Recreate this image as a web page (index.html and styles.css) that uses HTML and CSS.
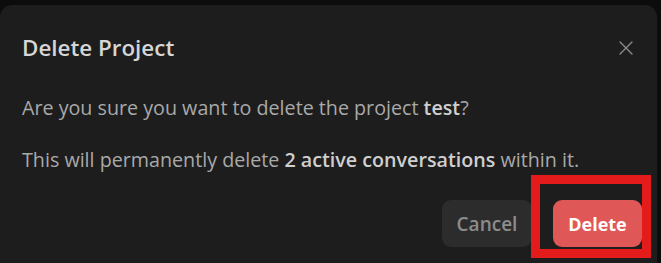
FILE: index.html
```html
<!DOCTYPE html>
<html>
<head>
<meta charset="utf-8">
<link rel="stylesheet" href="styles.css">
</head>
<body>
<div class="dialog">
  <div class="header">
    <h2 class="title">Delete Project</h2>
    <button class="close" aria-label="Close">
      <svg width="14" height="14" viewBox="0 0 14 14"><path d="M1 1L13 13M13 1L1 13" stroke="#8a8a8a" stroke-width="1.4" fill="none" stroke-linecap="round"/></svg>
    </button>
  </div>
  <p class="text first">Are you sure you want to delete the project <b>test</b>?</p>
  <p class="text second">This will permanently delete <b>2 active conversations</b> within it.</p>
  <div class="actions">
    <button class="btn cancel">Cancel</button>
    <div class="mark">
      <button class="btn delete">Delete</button>
      <span class="highlight"></span>
    </div>
  </div>
</div>
</body>
</html>
```
FILE: styles.css
```css
html, body {
  margin: 0;
  padding: 0;
  background: #0c0c0c;
  height: 263px;
  overflow: hidden;
}
.dialog {
  margin-top: 5px;
  width: 657px;
  height: 258px;
  box-sizing: border-box;
  background: #1d1d1d;
  border-radius: 12px 12px 0 0;
  padding: 28px 15px 0 22px;
  font-family: "Open Sans", "Noto Sans", sans-serif;
  color: #a9a9a9;
}
.header {
  display: flex;
  justify-content: space-between;
  align-items: center;
  height: 30px;
}
.title {
  margin: 0;
  font-size: 22.4px;
  line-height: 30px;
  font-weight: 600;
  color: #d6d6d6;
}
.close {
  background: none;
  border: 0;
  padding: 0;
  margin-right: 9px;
  width: 14px;
  height: 14px;
  display: flex;
}
.text {
  margin: 0;
  font-size: 19.7px;
  line-height: 28px;
}
.first { margin-top: 31px; }
.second { margin-top: 24px; }
.text b {
  font-weight: 600;
  color: #cfcfcf;
}
.actions {
  display: flex;
  justify-content: flex-end;
  gap: 21px;
  margin-top: 26px;
}
.btn {
  font-family: "Open Sans", "Noto Sans", sans-serif;
  font-weight: 600;
  height: 47px;
  border: 0;
  border-radius: 9px;
  padding: 0;
}
.cancel {
  width: 90px;
  font-size: 19px;
  background: #2c2c2c;
  color: #8c8c8c;
}
.delete {
  width: 89px;
  font-size: 18px;
  font-weight: 700;
  background: #df5757;
  color: #ffffff;
}
.mark {
  position: relative;
}
.highlight {
  position: absolute;
  left: -22px;
  top: -25px;
  width: 120px;
  height: 83px;
  box-sizing: border-box;
  border: 9px solid #e31b1b;
  pointer-events: none;
}
```
